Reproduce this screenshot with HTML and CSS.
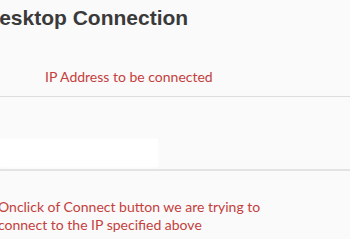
FILE: index.html
```html
<!DOCTYPE html>
<html lang="en">
<head>
  <meta charset="UTF-8">
  <meta name="viewport" content="width=device-width, initial-scale=1.0">
  <title>Desktop Connection</title>
  <link rel="stylesheet" href="styles.css">
</head>
<body>
  <h1 class="title">Desktop Connection</h1>
  <div class="label-row">
    <span class="note">IP Address to be connected</span>
  </div>
  <div class="input-row">
    <input class="ip-input" type="text">
  </div>
  <p class="note bottom-note">Onclick of Connect button we are trying to<br>connect to the IP specified above</p>
</body>
</html>
```

FILE: styles.css
```css
body {
  margin: 0;
  background-color: #fafafa;
  overflow: hidden;
}
.title {
  margin: 0 0 0 -16px;
  padding-top: 6px;
  font-family: "Liberation Sans", Arial, sans-serif;
  font-size: 21px;
  line-height: 24px;
  font-weight: bold;
  color: #3a3a3a;
}
.note {
  font-family: Lato, "Liberation Sans", sans-serif;
  font-size: 14px;
  color: #c4403d;
}
.label-row {
  height: 28px;
  padding: 38px 0 0 45px;
  border-bottom: 1px solid #dddddd;
  line-height: 17px;
}
.input-row {
  height: 30px;
  padding-top: 42px;
  border-bottom: 2px solid #e3e3e3;
}
.ip-input {
  display: block;
  width: 158px;
  height: 28px;
  margin: 0;
  padding: 0;
  border: none;
  background-color: #ffffff;
  box-shadow: 0 0 3px #ffffff;
}
.bottom-note {
  margin: 27px 0 0 -2px;
  line-height: 18px;
}
```
